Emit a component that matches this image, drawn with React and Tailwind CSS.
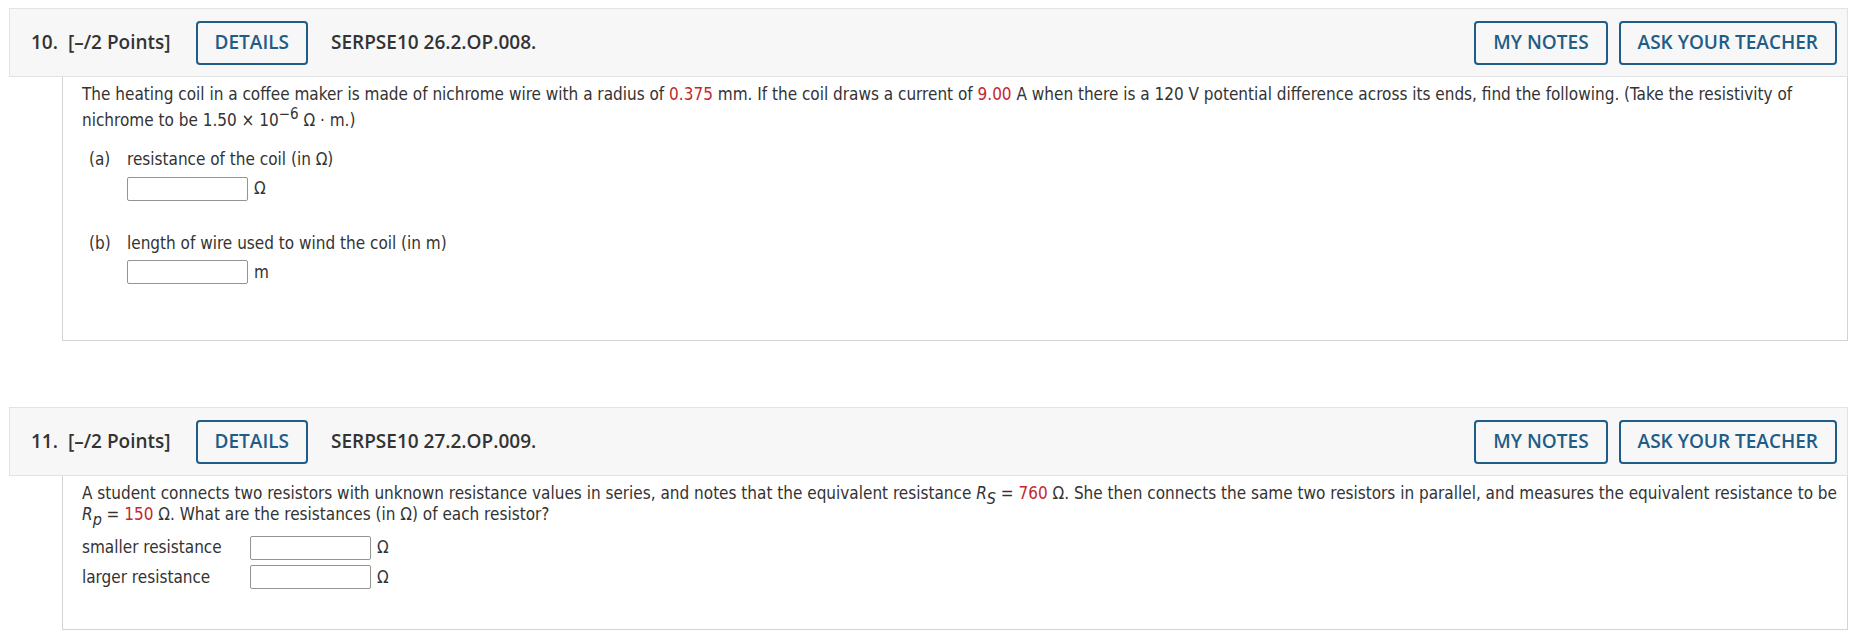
import React from 'react';

const Btn = ({ children, className = '' }) => (
  <button
    className={`h-[44px] rounded-[4px] border-2 border-[#1f5c87] px-[17px] text-[#1f5c87] font-semibold ${className}`}
  >
    {children}
  </button>
);

const Red = ({ children }) => <span className="text-[#c3282e]">{children}</span>;

const Answer = ({ unit, className = '' }) => (
  <div className={`flex items-center ${className}`}>
    <input className="h-[24px] w-[121px] rounded-[2px] border border-[#949494] bg-white" />
    <span className="ml-[6px]">{unit}</span>
  </div>
);

const QuestionHeader = ({ num, code }) => (
  <div className="flex h-[69px] items-center border border-[#e3e3e3] bg-[#f7f7f7] pl-[21px] pr-[10px] font-['Open_Sans',sans-serif] font-stretch-normal text-[19px] font-semibold text-[#333]">
    <span>{num}.</span>
    <span className="ml-[10px]">[–/2 Points]</span>
    <Btn className="ml-[25px]">DETAILS</Btn>
    <span className="ml-[23px]">{code}</span>
    <div className="ml-auto flex gap-[11px]">
      <Btn>MY NOTES</Btn>
      <Btn>ASK YOUR TEACHER</Btn>
    </div>
  </div>
);

export default function App() {
  return (
    <div className="h-[633px] overflow-hidden bg-white pl-[9px] pr-[19px] pt-[8px] font-['DejaVu_Sans_Condensed','DejaVu_Sans',Verdana,sans-serif] font-stretch-condensed text-[17px] text-[#333]">
      {/* question 10 */}
      <QuestionHeader num="10" code="SERPSE10 26.2.OP.008." />
      <div className="ml-[53px] border border-t-0 border-[#d4d4d4] bg-white pb-[55px] pl-[19px] pr-[6px] pt-[4px]">
        <p className="leading-[26px]">
          The heating coil in a coffee maker is made of nichrome wire with a radius of <Red>0.375</Red> mm. If the
          coil draws a current of <Red>9.00</Red> A when there is a 120 V potential difference across its ends, find
          the following. (Take the resistivity of nichrome to be 1.50 × 10
          <sup className="text-[15px]">−6</sup> Ω · m.)
        </p>

        <div className="mt-[16px] flex pl-[7px] leading-[21px]">
          <span className="w-[38px]">(a)</span>
          <span>resistance of the coil (in Ω)</span>
        </div>
        <Answer unit="Ω" className="ml-[45px] mt-[6px]" />

        <div className="mt-[31px] flex pl-[7px] leading-[21px]">
          <span className="w-[38px]">(b)</span>
          <span>length of wire used to wind the coil (in m)</span>
        </div>
        <Answer unit="m" className="ml-[45px] mt-[6px]" />
      </div>

      {/* question 11 */}
      <div className="mt-[66px]">
        <QuestionHeader num="11" code="SERPSE10 27.2.OP.009." />
        <div className="ml-[53px] border border-t-0 border-[#d4d4d4] bg-white pb-[39px] pl-[19px] pr-[6px] pt-[7px]">
          <p className="leading-[21px]">
            A student connects two resistors with unknown resistance values in series, and notes that the equivalent
            resistance <i>R</i>
            <sub className="-bottom-[5px] text-[16px] italic">S</sub> = <Red>760</Red> Ω. She then connects the same
            two resistors in parallel, and measures the equivalent resistance to be <i>R</i>
            <sub className="-bottom-[5px] text-[16px] italic">p</sub> = <Red>150</Red> Ω. What are the resistances
            (in Ω) of each resistor?
          </p>

          <div className="mt-[10px] flex flex-col gap-[4px]">
            <div className="flex items-center">
              <span className="w-[168px]">smaller resistance</span>
              <Answer unit="Ω" />
            </div>
            <div className="flex items-center">
              <span className="w-[168px]">larger resistance</span>
              <Answer unit="Ω" />
            </div>
          </div>
        </div>
      </div>
    </div>
  );
}
